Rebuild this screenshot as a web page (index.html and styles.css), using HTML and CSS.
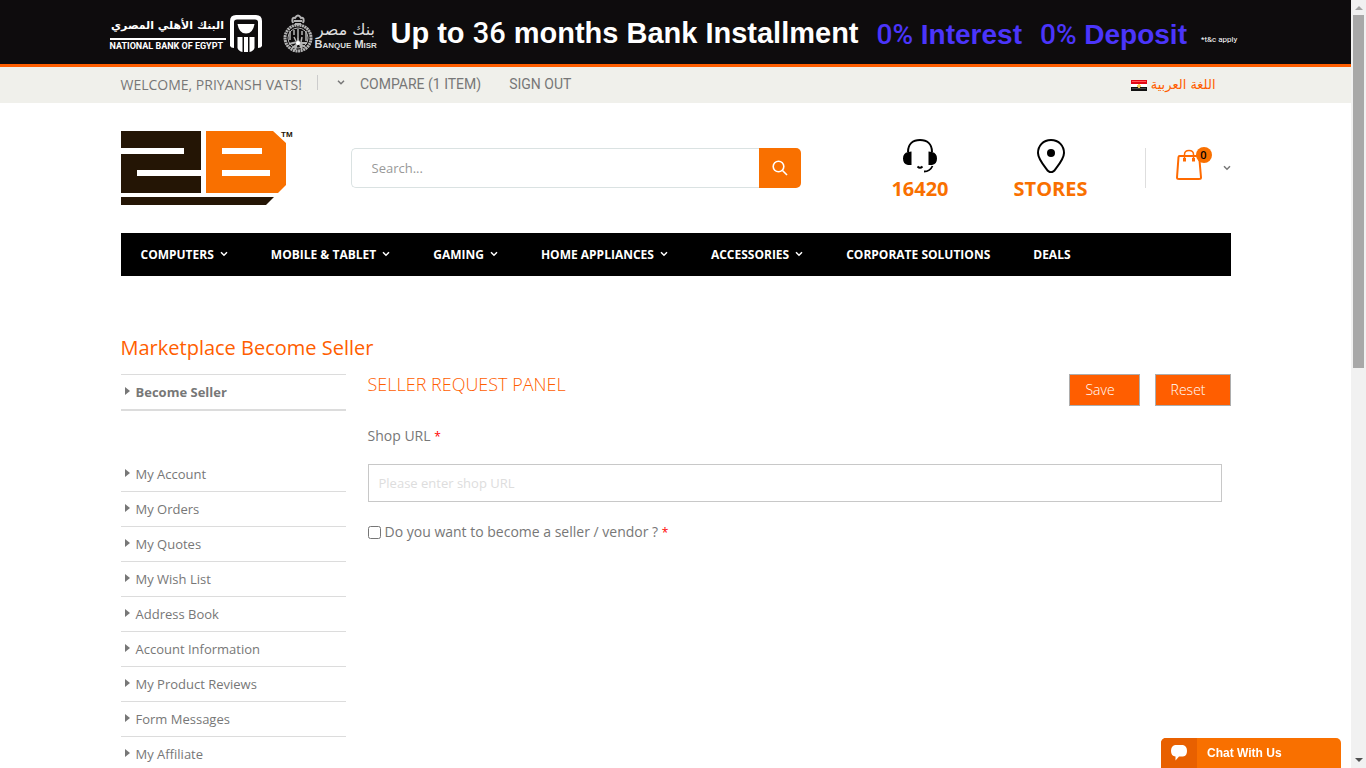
FILE: index.html
```html
<!DOCTYPE html>
<html lang="en">
<head>
    <meta charset="UTF-8">
    <meta name="viewport" content="width=device-width, initial-scale=1.0">
    <title>Marketplace Become Seller</title>
    <link rel="stylesheet" href="styles.css">
</head>
<body>

    <!-- shared icons -->
    <svg class="sprite" aria-hidden="true">
        <symbol id="chevron" viewBox="0 0 8 6">
            <path d="M1 1.200l3 3 3-3" fill="none" stroke="currentColor" stroke-width="1.500"/>
        </symbol>
    </svg>

    <div class="page">
        <div class="promo">
            <div class="promo-inner">
                <div class="nbe">
                    <div class="nbe-text">
                        <span class="nbe-ar" lang="ar" dir="rtl">البنك الأهلي المصري</span>
                        <span class="nbe-en">NATIONAL BANK OF EGYPT</span>
                    </div>
                    <svg class="nbe-mark" viewBox="0 0 32 37" width="32" height="37" fill="#fff">
                        <path d="M0 31V6Q0 0 6 0H26Q32 0 32 6V31Q31 33 28 33V7Q28 4.500 25 4.500H7Q4 4.500 4 7V33Q1 33 0 31Z"/>
                        <path d="M7.500 9H24.500Q23 18.500 16 18.500T7.500 9Z"/>
                        <path d="M7.500 22H12.500V37Q8.500 36 7.500 33ZM14 22H18V37H14ZM19.500 22H24.500V33Q23.500 36 19.500 37Z"/>
                    </svg>
                </div>
                <div class="misr">
                    <svg class="misr-mark" viewBox="0 0 30 39" width="30" height="39">
                        <g fill="none" stroke="#b4b4b4">
                            <circle cx="15" cy="24" r="13" stroke-width="3" stroke-dasharray="2 .6"/>
                            <circle cx="15" cy="24" r="10" stroke-width="1"/>
                            <path d="M10 9Q8 3 12 4Q15-1 18 4Q22 3 20 9M11 7H19M12 10H18" stroke-width="2"/>
                            <path d="M7 17V26M11 16V21M15 15V25M19 17V21M23 17V27M11 23L13 27M19 23L18 28" stroke-width="1.500"/>
                            <path d="M6 30L14 28L22 33M9 34L16 29L24 29M12 36L15 26L19 35" stroke-width="2"/>
                        </g>
                        <circle cx="15" cy="29" r="2" fill="#fff"/>
                    </svg>
                    <div class="misr-text">
                        <span class="misr-ar" lang="ar" dir="rtl">بنك مصر</span>
                        <span class="misr-en">Banque Misr</span>
                    </div>
                </div>
                <strong class="promo-main">Up to <span class="thin">36</span> months Bank Installment</strong>
                <strong class="promo-offer"><span class="thin">0%</span> Interest</strong>
                <strong class="promo-offer"><span class="thin">0%</span> Deposit</strong>
                <small class="promo-note">*t&amp;c apply</small>
            </div>
        </div>

        <div class="topbar">
            <div class="container topbar-inner">
                <span class="welcome">WELCOME, PRIYANSH VATS!</span>
                <svg class="icon-chevron topbar-chevron"><use href="#chevron"/></svg>
                <a class="topbar-link" href="#">COMPARE (1 ITEM)</a>
                <a class="topbar-link" href="#">SIGN OUT</a>
                <a class="language" href="#" lang="ar">
                    <svg viewBox="0 0 16 11" width="16" height="11">
                        <path fill="#e30613" d="M0 0h16v4H0z"/>
                        <path fill="#f55" d="M1 1h14v1H1z"/>
                        <path fill="#fff" d="M0 4h16v3H0z"/>
                        <path fill="#111" d="M0 7h16v4H0z"/>
                        <path fill="#444" d="M1 8h14v1H1z"/>
                        <path fill="#f5d060" d="M7 4h2v1h1v2H9v1H7V7H6V5h1z"/>
                    </svg>
                    <span>اللغة العربية</span>
                </a>
            </div>
        </div>

        <header class="container header">
            <a class="logo" href="#" aria-label="2B">
                <svg viewBox="0 0 173 75" width="173" height="75">
                    <path fill="#241505" d="M0 0H80V39H16V45H80V62H0V23H63V17H0Z"/>
                    <path fill="#241505" d="M0 66H153L145 74H0Z"/>
                    <path fill="#f97000" fill-rule="evenodd" d="M85 0H152L165 12V54L157 62H85ZM101 17V23H141V17ZM101 39V45H149V39Z"/>
                    <text x="160" y="6" class="logo-tm">TM</text>
                </svg>
            </a>
            <form class="search">
                <input type="text" class="search-input" placeholder="Search..." aria-label="Search">
                <button type="button" class="search-button" aria-label="Search">
                    <svg viewBox="0 0 16 16" width="16" height="16" fill="none" stroke="#fff" stroke-width="1.600">
                        <circle cx="6.500" cy="6.500" r="5.300"/>
                        <path d="M10.500 10.500L15 15"/>
                    </svg>
                </button>
            </form>
            <div class="header-links">
                <a class="header-link" href="#">
                    <svg viewBox="0 0 36 34" width="36" height="34">
                        <path d="M6 13C6 5 11 1 18 1S30 5 30 13" fill="none" stroke="#000" stroke-width="2"/>
                        <path d="M9.500 12.500V26H6Q1 25 1 19.500T6 13ZM26.500 12.500V26H30Q35 25 35 19.500T30 13Z"/>
                        <path d="M15.500 27.500Q18 30 20.500 27.500M30.500 27Q28 32.500 22 32.500" fill="none" stroke="#000" stroke-width="1.800"/>
                    </svg>
                    <span>16420</span>
                </a>
                <a class="header-link" href="#">
                    <svg viewBox="0 0 36 34" width="36" height="34">
                        <path d="M18 1C10 1 5 7 5 14C5 20 12 28 14.500 31.500Q18 35 21.500 31.500C24 28 31 20 31 14C31 7 26 1 18 1Z" fill="none" stroke="#000" stroke-width="2"/>
                        <circle cx="18" cy="14" r="4"/>
                    </svg>
                    <span>STORES</span>
                </a>
            </div>
            <a class="cart" href="#" aria-label="Cart">
                <svg class="cart-icon" viewBox="0 0 26 32" width="26" height="32" fill="none" stroke="#ff6a00">
                    <path d="M3.500 7H22Q23 7 23.200 8L25 28.500Q25 30 23 30H3Q1 30 1 28.500L2.500 8Q2.600 7 3.500 7Z" stroke-width="2"/>
                    <path d="M8.500 11V5.500Q8.500 1.500 13 1.500T17.500 5.500V11" stroke-width="1.500"/>
                    <path d="M8.500 9V12.500M17.500 9V12.500" stroke-width="3"/>
                </svg>
                <span class="cart-count">0</span>
                <svg class="icon-chevron"><use href="#chevron"/></svg>
            </a>
        </header>

        <div class="container">
            <nav class="nav">
                <a href="#">COMPUTERS <svg class="icon-chevron"><use href="#chevron"/></svg></a>
                <a href="#">MOBILE &amp; TABLET <svg class="icon-chevron"><use href="#chevron"/></svg></a>
                <a href="#">GAMING <svg class="icon-chevron"><use href="#chevron"/></svg></a>
                <a href="#">HOME APPLIANCES <svg class="icon-chevron"><use href="#chevron"/></svg></a>
                <a href="#">ACCESSORIES <svg class="icon-chevron"><use href="#chevron"/></svg></a>
                <a href="#">CORPORATE SOLUTIONS</a>
                <a href="#">DEALS</a>
            </nav>
        </div>

        <main class="container">
            <h1 class="page-title">Marketplace Become Seller</h1>
            <div class="columns">
                <aside class="sidebar">
                    <ul class="side-list seller-list">
                        <li><a href="#">Become Seller</a></li>
                    </ul>
                    <ul class="side-list">
                        <li><a href="#">My Account</a></li>
                        <li><a href="#">My Orders</a></li>
                        <li><a href="#">My Quotes</a></li>
                        <li><a href="#">My Wish List</a></li>
                        <li><a href="#">Address Book</a></li>
                        <li><a href="#">Account Information</a></li>
                        <li><a href="#">My Product Reviews</a></li>
                        <li><a href="#">Form Messages</a></li>
                        <li><a href="#">My Affiliate</a></li>
                    </ul>
                </aside>

                <form class="panel">
                    <div class="panel-head">
                        <h2>SELLER REQUEST PANEL</h2>
                        <div class="panel-buttons">
                            <button type="button">Save</button>
                            <button type="reset">Reset</button>
                        </div>
                    </div>
                    <label class="field-label" for="shopUrl">Shop URL <span class="required">*</span></label>
                    <input type="text" id="shopUrl" class="shop-url" placeholder="Please enter shop URL">
                    <div class="agree">
                        <input type="checkbox" id="isSeller">
                        <label for="isSeller">Do you want to become a seller / vendor ? <span class="required">*</span></label>
                    </div>
                </form>
            </div>
        </main>
    </div>

    <div class="scrollbar" aria-hidden="true">
        <span class="arrow-up"></span>
        <span class="thumb"></span>
        <span class="arrow-down"></span>
    </div>

    <button type="button" class="chat">
        <span class="chat-icon">
            <svg viewBox="0 0 18 16" width="18" height="16">
                <path fill="#fff" d="M5 0H13Q17 1 17 6T13 11.500H9L5.500 15.500V11.500Q1 11 1 6T5 0Z"/>
            </svg>
        </span>
        <span class="chat-label">Chat With Us</span>
    </button>

</body>
</html>
```
FILE: styles.css
```css
* {
    box-sizing: border-box;
}
body {
    margin: 0;
    display: flex;
    height: 100vh;
    overflow: hidden;
    font-family: "Open Sans", sans-serif;
    font-size: 14px;
    line-height: 20px;
    color: #777;
    background-color: #fff;
}
a {
    color: inherit;
    text-decoration: none;
}
svg {
    display: block;
    flex-shrink: 0;
}
.sprite {
    position: absolute;
    width: 0;
    height: 0;
}
.icon-chevron {
    width: 8px;
    height: 6px;
}
.page {
    flex: 1;
    min-width: 0;
    overflow: hidden;
}
.container {
    max-width: 1140px;
    margin: 0 auto;
    padding: 0 15px;
}

/* promo banner */
.promo {
    background-color: #0e0c0d;
    border-bottom: 3px solid #ff5e00;
}
.promo-inner {
    display: flex;
    align-items: center;
    max-width: 1132px;
    height: 64px;
    padding-top: 2px;
    margin: 0 auto;
    font-family: "Liberation Sans", Arial, sans-serif;
    color: #fff;
    white-space: nowrap;
}
.nbe {
    display: flex;
    align-items: center;
    gap: 4px;
}
.nbe-text {
    display: flex;
    flex-direction: column;
    width: 116px;
}
.nbe-ar {
    font-family: "DejaVu Sans", sans-serif;
    font-size: 11px;
    font-weight: bold;
    line-height: 24px;
    text-align: center;
    border-bottom: 2px solid #fff;
}
.nbe-en {
    font-family: Roboto, sans-serif;
    font-size: 9px;
    font-weight: bold;
    line-height: 13px;
}
.misr {
    display: flex;
    align-items: center;
    gap: 2px;
    margin-left: 21px;
    color: #ddd;
}
.misr-text {
    display: flex;
    flex-direction: column;
    width: 62px;
    padding-top: 6px;
}
.misr-ar {
    font-family: "DejaVu Sans", sans-serif;
    font-size: 16px;
    line-height: 16px;
    text-align: center;
}
.misr-en {
    font-size: 11px;
    font-weight: bold;
    font-variant: small-caps;
    line-height: 12px;
}
.promo-main {
    margin-left: 14px;
    font-size: 29px;
    line-height: 36px;
}
.promo-offer {
    margin: 4px 0 0 18px;
    font-size: 28px;
    line-height: 36px;
    color: #4b35fb;
}
.thin {
    font-family: Roboto, sans-serif;
    font-weight: 500;
}
.promo-note {
    margin: 14px 0 0 14px;
    font-family: Roboto, sans-serif;
    font-size: 8px;
    line-height: 12px;
}

/* top bar */
.topbar {
    background-color: #f0f0eb;
}
.topbar-inner {
    display: flex;
    align-items: center;
    height: 36px;
}
.welcome {
    margin-right: 15px;
}
.topbar-chevron {
    box-sizing: content-box;
    height: 15px;
    padding-left: 19px;
    margin: 0 15px 5px 0;
    border-left: 1px solid #ccc;
}
.topbar-link {
    margin: 0 28px 2px 0;
    font-family: Roboto, sans-serif;
}
.language {
    display: flex;
    align-items: center;
    gap: 4px;
    margin: 0 15px 0 auto;
    font-family: "DejaVu Sans", sans-serif;
    font-size: 13px;
    color: #ff5e00;
}

/* header */
.header {
    display: flex;
    align-items: center;
    height: 130px;
}
.logo-tm {
    font-family: "Liberation Sans", Arial, sans-serif;
    font-size: 8px;
    font-weight: bold;
    fill: #241505;
}
.search {
    display: flex;
    width: 450px;
    height: 40px;
    margin-left: 57px;
}
.search-input {
    flex: 1;
    min-width: 0;
    padding: 0 20px;
    font-family: inherit;
    font-size: 13px;
    color: #777;
    border: 1px solid #dae2e2;
    border-right: none;
    border-radius: 5px 0 0 5px;
}
.search-input::placeholder {
    color: #999;
}
.search-button {
    display: flex;
    align-items: center;
    justify-content: center;
    width: 42px;
    padding: 0;
    border: none;
    border-radius: 0 5px 5px 0;
    background-color: #f97000;
}
.header-links {
    display: flex;
    gap: 65px;
    margin-left: auto;
    padding-top: 4px;
}
.header-link {
    display: flex;
    flex-direction: column;
    align-items: center;
    gap: 4px;
    font-size: 20px;
    font-weight: bold;
    line-height: 24px;
    color: #f97000;
}
.cart {
    position: relative;
    display: flex;
    align-items: center;
    gap: 21px;
    height: 40px;
    margin-left: 57px;
    padding-left: 30px;
    border-left: 1px solid #dedede;
}
.cart-icon {
    margin-bottom: 6px;
}
.cart-count {
    position: absolute;
    left: 50px;
    top: -1px;
    width: 16px;
    height: 16px;
    border-radius: 50%;
    background-color: #f97000;
    color: #000;
    font-size: 11px;
    font-weight: 600;
    line-height: 16px;
    text-align: center;
}

/* main menu */
.nav {
    display: flex;
    align-items: center;
    gap: 43px;
    height: 43px;
    padding: 0 20px;
    background-color: #000;
    color: #fff;
    font-size: 12px;
    font-weight: bold;
    white-space: nowrap;
}
.nav a {
    display: flex;
    align-items: center;
    gap: 6px;
}
.nav .icon-chevron {
    margin-bottom: 2px;
}

/* content */
.page-title {
    margin: 58px 0 12px;
    font-size: 20px;
    font-weight: normal;
    line-height: 28px;
    color: #ff5e00;
}
.columns {
    display: grid;
    grid-template-columns: 225px 1fr;
    gap: 22px;
}
.side-list {
    list-style: none;
    margin: 0;
    padding: 0;
    font-size: 13px;
}
.side-list li {
    border-bottom: 1px solid #dcdcdc;
}
.side-list a {
    display: flex;
    align-items: center;
    gap: 6px;
    height: 34px;
    padding-left: 4px;
}
.side-list a::before {
    content: "";
    margin-bottom: 2px;
    border-left: 5px solid #777;
    border-top: 4px solid transparent;
    border-bottom: 4px solid transparent;
}
.seller-list {
    margin-bottom: 46px;
    border-top: 1px solid #dcdcdc;
    font-weight: bold;
}
.seller-list li {
    border-bottom-width: 2px;
}
.panel-head {
    display: flex;
    justify-content: space-between;
    height: 32px;
    margin-bottom: 20px;
}
.panel-head h2 {
    margin: 0;
    font-size: 18px;
    font-weight: 300;
    line-height: 20px;
    color: #ff5e00;
}
.panel-buttons {
    display: flex;
    gap: 15px;
}
.panel-buttons button {
    padding: 0 24px 2px 15px;
    font-family: inherit;
    font-size: 14px;
    font-weight: 300;
    color: #fff;
    background-color: #ff5e00;
    border: 1px solid #adadad;
}
.field-label {
    display: block;
    margin-bottom: 17px;
}
.required {
    font-size: 12px;
    color: #f00;
}
.shop-url {
    display: block;
    width: 99%;
    height: 38px;
    padding: 0 10px;
    font-family: inherit;
    font-size: 13px;
    color: #777;
    border: 1px solid #c8c8c8;
}
.shop-url::placeholder {
    color: #ddd;
}
.agree {
    display: flex;
    align-items: center;
    gap: 4px;
    margin-top: 20px;
}
.agree input {
    width: 13px;
    height: 13px;
    margin: 0;
}

/* scroll track */
.scrollbar {
    display: flex;
    flex-direction: column;
    align-items: center;
    width: 15px;
    padding: 6px 0;
    background-color: #f1f1f1;
}
.arrow-up,
.arrow-down {
    border-left: 4px solid transparent;
    border-right: 4px solid transparent;
}
.arrow-up {
    border-bottom: 4px solid #a3a3a3;
}
.arrow-down {
    margin-top: auto;
    border-top: 4px solid #505050;
}
.thumb {
    width: 11px;
    height: 46vh;
    margin-top: 5px;
    background-color: #a8a8a8;
}

/* chat widget */
.chat {
    position: fixed;
    right: 25px;
    bottom: 0;
    display: flex;
    width: 180px;
    height: 30px;
    padding: 0;
    border: none;
    border-radius: 5px 5px 0 0;
    overflow: hidden;
    background-color: #f97000;
    color: #fff;
    font-family: "Liberation Sans", Arial, sans-serif;
    font-size: 12px;
    font-weight: bold;
    line-height: 30px;
}
.chat-icon {
    display: flex;
    align-items: center;
    justify-content: center;
    width: 36px;
    height: 30px;
    background-color: #e86000;
}
.chat-label {
    padding-left: 10px;
}
```
